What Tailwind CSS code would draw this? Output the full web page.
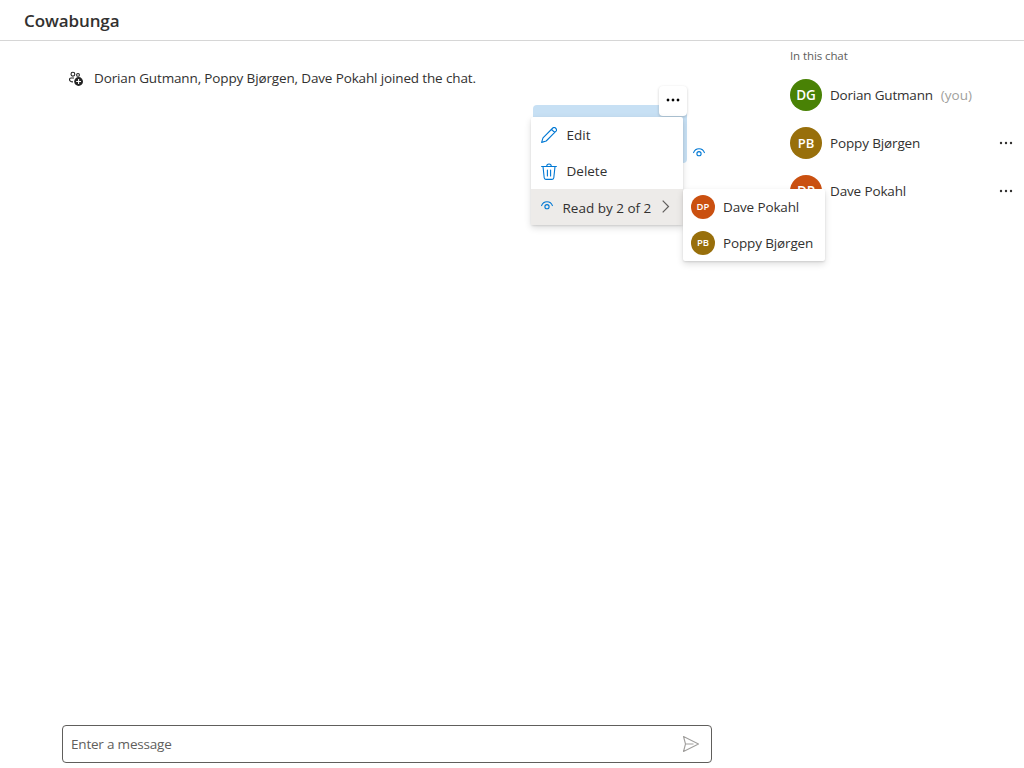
<!DOCTYPE html>
<html lang="en">
<head>
<meta charset="utf-8">
<title>Cowabunga</title>
<script src="https://cdn.jsdelivr.net/npm/@tailwindcss/browser@4"></script>
</head>
<body class="relative flex h-screen flex-col overflow-hidden bg-white font-['Segoe_UI','Open_Sans',sans-serif] text-[13.5px] leading-5 tracking-[-0.14px] text-[#323130]">
<svg class="hidden">
  <symbol id="eye" viewBox="0 0 12 9"><path d="M.6 4.600C1.400 2.200 3.500.7 6 .7s4.600 1.500 5.400 3.900" fill="none" stroke="currentColor" stroke-width="1.100" stroke-linecap="round"/><circle cx="6" cy="5.700" r="2.100" fill="none" stroke="currentColor" stroke-width="1.100"/></symbol>
  <symbol id="dots" viewBox="0 0 14 4"><circle cx="2" cy="2" r="1.200"/><circle cx="7" cy="2" r="1.200"/><circle cx="12" cy="2" r="1.200"/></symbol>
</svg>
<header class="flex h-[41px] shrink-0 items-center border-b border-[#d6d6d6] px-6 pt-0.5">
  <h1 class="text-[17px] font-semibold leading-6 tracking-[-0.1px]"><span>Cowabunga</span></h1>
</header>
<div class="flex min-h-0 flex-1">
  <main class="flex w-[774px] flex-col justify-between px-[62px] pb-[5px]">
    <div>
      <div class="flex items-center gap-[10px] pt-[27px] pl-[6px]">
        <svg class="mt-px h-[17px] w-4" viewBox="0 0 16 17" fill="none" stroke="#242424" stroke-width="1.100"><circle cx="4.900" cy="4.200" r="1.900"/><circle cx="10" cy="4.900" r="1.400"/><path d="M6 8H3C2.100 8 1.500 8.600 1.500 9.300c0 1.700 1.300 2.600 3.500 2.600"/><circle cx="10.600" cy="11.500" r="4.400" fill="#242424" stroke="none"/><path d="M10.600 9.100v4.800M8.200 11.500h4.800" stroke="#fff"/></svg>
        <span>Dorian Gutmann, Poppy Bjørgen, Dave Pokahl joined the chat.</span>
      </div>
      <div class="mt-[17px] flex items-end justify-end gap-1.5 pr-[7px]">
        <div class="h-[58px] w-[154px] rounded bg-[#c7e0f4]"></div>
        <svg class="mb-1.5 h-[9px] w-3 text-[#0078d4]"><use href="#eye"/></svg>
      </div>
    </div>
    <div class="flex h-[38px] w-[650px] items-center justify-between rounded border border-[#605e5c] pl-2 pr-[11px] tracking-[-0.2px] text-[#605e5c]">
      <span>Enter a message</span>
      <svg class="h-[18px] w-[18px]" viewBox="0 0 18 18" fill="none" stroke="#a19f9d" stroke-width="1.100" stroke-linejoin="round"><path d="M1.500 1.500 16.500 9 1.500 16.500 3.500 9ZM3.500 9h8"/></svg>
    </div>
  </main>
  <aside class="w-[250px] pl-4">
    <div class="pt-[5px] text-[11.500px] tracking-[-0.1px] text-[#605e5c]"><span>In this chat</span></div>
    <div class="mt-1">
      <div class="flex h-12 items-center pt-0.5 pr-[11px]"><b class="mr-2 grid size-8 place-items-center rounded-full bg-[#498205] text-[13.500px] font-semibold tracking-normal text-white">DG</b><span class="tracking-[-0.2px]">Dorian Gutmann</span><span class="ml-2 tracking-normal text-[#a19f9d]">(you)</span></div>
      <div class="flex h-12 items-center pt-0.5 pr-[11px]"><b class="mr-2 grid size-8 place-items-center rounded-full bg-[#986f0b] text-[13px] font-semibold tracking-normal text-white">PB</b><span>Poppy Bjørgen</span><svg class="ml-auto h-1 w-[14px] fill-[#323130]"><use href="#dots"/></svg></div>
      <div class="flex h-12 items-center pt-0.5 pr-[11px]"><b class="mr-2 grid size-8 place-items-center rounded-full bg-[#ca5010] text-[13.500px] font-semibold tracking-normal text-white">DP</b><span>Dave Pokahl</span><svg class="ml-auto h-1 w-[14px] fill-[#323130]"><use href="#dots"/></svg></div>
    </div>
  </aside>
</div>
<button class="absolute left-[659px] top-[86px] grid h-[30px] w-7 place-items-center rounded bg-white pb-0.5 shadow-[0_1px_3px_rgba(0,0,0,.2)]"><svg class="h-1 w-[14px] fill-black stroke-black stroke-[.4]"><use href="#dots"/></svg></button>
<div class="absolute left-[531px] top-[117px] w-[152px] rounded-xs bg-white tracking-normal shadow-[0_3px_7px_rgba(0,0,0,.133),0_1px_2px_rgba(0,0,0,.11)]">
  <div class="flex h-9 items-center gap-[9.500px] pl-[10px]"><svg class="h-4 w-4" viewBox="0 0 16 16" fill="none" stroke="#0078d4" stroke-width="1.100" stroke-linejoin="round"><path d="M.6 15.400 2 10.800 11.800 1c1.800-1.700 4.900 1.300 3.200 3.200L5.200 14ZM10.500 2.300l3.200 3.200"/></svg><span>Edit</span></div>
  <div class="flex h-9 items-center gap-[9.500px] pl-[10px]"><svg class="h-[17px] w-4" viewBox="0 0 16 17" fill="none" stroke="#0078d4" stroke-width="1.100" stroke-linecap="round" stroke-linejoin="round"><path d="M.6 3.500h14.800M5.700 3.500C5.700.1 10.300.1 10.300 3.500M2 3.500l1.200 11.300c.1.900.7 1.600 1.600 1.600h6.400c.9 0 1.500-.7 1.600-1.600L14 3.500M6.400 7v6M9.600 7v6"/></svg><span>Delete</span></div>
  <div class="flex h-9 items-center bg-[#edebe9] pl-[10px]"><svg class="mb-[3px] h-[9px] w-3 text-[#0078d4]"><use href="#eye"/></svg><span class="ml-[9.500px] pt-0.5">Read by 2 of 2</span><svg class="mb-px ml-auto mr-[13px] h-[13px] w-2" viewBox="0 0 8 13" fill="none" stroke="#605e5c" stroke-width="1.200"><path d="m.7.7 5.800 5.800-5.800 5.800"/></svg></div>
</div>
<div class="absolute left-[683px] top-[189px] w-[142px] rounded-xs bg-white shadow-[0_3px_7px_rgba(0,0,0,.133),0_1px_2px_rgba(0,0,0,.11)]">
  <div class="flex h-9 items-center gap-2 pl-2"><b class="grid size-6 place-items-center rounded-full bg-[#ca5010] text-[9.500px] font-semibold tracking-normal text-white">DP</b><span>Dave Pokahl</span></div>
  <div class="flex h-9 items-center gap-2 pl-2"><b class="grid size-6 place-items-center rounded-full bg-[#986f0b] text-[9.500px] font-semibold tracking-normal text-white">PB</b><span>Poppy Bjørgen</span></div>
</div>
</body>
</html>
